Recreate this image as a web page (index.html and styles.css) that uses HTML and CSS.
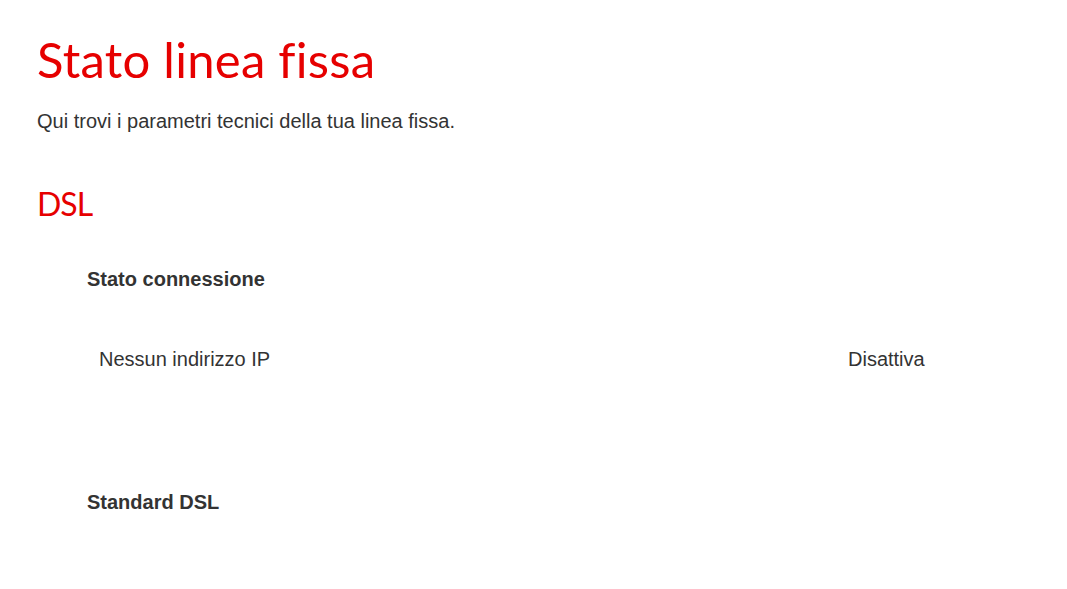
FILE: index.html
```html
<!DOCTYPE html>
<html lang="it">
<head>
    <meta charset="UTF-8">
    <meta name="viewport" content="width=device-width, initial-scale=1.0">
    <title>Stato linea fissa</title>
    <link rel="stylesheet" href="styles.css">
</head>
<body>
    <div class="page">
        <h1>Stato linea fissa</h1>
        <p class="intro">Qui trovi i parametri tecnici della tua linea fissa.</p>

        <h2>DSL</h2>

        <div class="section">
            <h3>Stato connessione</h3>
            <div class="row">
                <span class="label">Nessun indirizzo IP</span>
                <span class="value">Disattiva</span>
            </div>
        </div>

        <div class="section">
            <h3>Standard DSL</h3>
        </div>
    </div>
</body>
</html>
```

FILE: styles.css
```css
body {
    margin: 0;
    font-family: "Liberation Sans", Arial, sans-serif;
    font-size: 20px;
    line-height: 23px;
    color: #333;
    background-color: #fff;
}

.page {
    padding: 35px 37px;
}

h1 {
    font-family: Lato, "Open Sans", sans-serif;
    font-weight: normal;
    font-size: 49px;
    line-height: 49px;
    letter-spacing: 0.25px;
    font-variant-ligatures: none;
    color: #e60000;
    margin: 0;
}

.intro {
    margin: 26px 0 0;
}

h2 {
    font-family: Lato, "Open Sans", sans-serif;
    font-weight: normal;
    font-size: 32px;
    line-height: 32px;
    letter-spacing: -1px;
    color: #e60000;
    margin: 55px 0 0;
}

.section {
    padding-left: 50px;
}

h3 {
    font-size: 20px;
    font-weight: bold;
    margin: 48px 0 0;
}

.row {
    display: flex;
    padding: 0 12px;
    margin-top: 57px;
}

.label {
    width: 749px;
}

.section + .section h3 {
    margin-top: 120px;
}
```
